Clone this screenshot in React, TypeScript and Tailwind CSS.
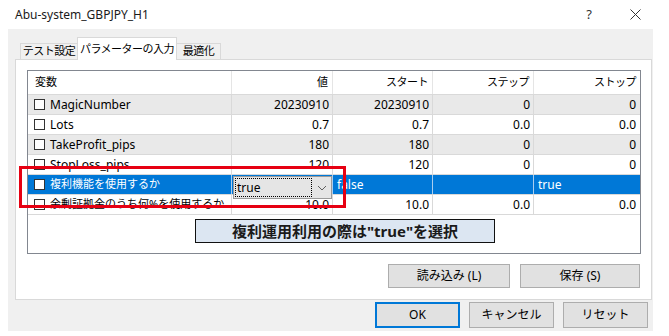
const rows = [
  { name: "MagicNumber", value: "20230910", start: "20230910", step: "0", stop: "0" },
  { name: "Lots", value: "0.7", start: "0.7", step: "0.0", stop: "0.0" },
  { name: "TakeProfit_pips", value: "180", start: "180", step: "0", stop: "0" },
  { name: "StopLoss_pips", value: "120", start: "120", step: "0", stop: "0" },
  { name: "複利機能を使用するか", selected: true },
  { name: "余剰証拠金のうち何%を使用するか", value: "10.0", start: "10.0", step: "0.0", stop: "0.0" },
];

function CheckBox() {
  return <span className="w-[11px] h-[11px] border border-[#333] bg-white shrink-0" />;
}

function Row({ row, index }: { row: (typeof rows)[number]; index: number }) {
  if (row.selected) {
    return (
      <div className="flex h-[20px] border-b border-[#d9d9d9] bg-[#0078d7] text-white">
        <div className="w-[204px] flex items-center gap-[5px] pl-[6px] border-r border-[#a9cdef] text-[11px]">
          <CheckBox />
          <span>{row.name}</span>
        </div>
        <div className="w-[101px] border-r border-[#a9cdef] pl-px">
          <div className="relative z-10 mt-px w-[99px] h-[23px] bg-[#e5e5e5] border border-[#9a9a9a] flex items-center pl-px text-black">
            <div className="w-[77px] h-[19px] border border-dotted border-black flex items-center pl-px">
              true
            </div>
            <svg className="ml-[5px]" width="10" height="6" viewBox="0 0 10 6">
              <path d="M1 1 L5 5 L9 1" fill="none" stroke="#606060" strokeWidth="1" />
            </svg>
          </div>
        </div>
        <div className="w-[100px] border-r border-[#a9cdef] flex items-center pl-[4px]">false</div>
        <div className="w-[101px] border-r border-[#a9cdef]" />
        <div className="w-[106px] flex items-center pl-[4px]">true</div>
      </div>
    );
  }
  const bg = index % 2 === 0 ? "bg-[#e9e9e9]" : "bg-white";
  return (
    <div className={`flex h-[20px] border-b border-[#d9d9d9] ${bg}`}>
      <div className="w-[204px] flex items-center gap-[5px] pl-[6px] border-r border-[#d9d9d9]">
        <CheckBox />
        <span className={/^[A-Za-z]/.test(row.name) ? "" : "text-[11px]"}>{row.name}</span>
      </div>
      <div className="w-[101px] border-r border-[#d9d9d9] flex items-center justify-end pr-[3px]">{row.value}</div>
      <div className="w-[100px] border-r border-[#d9d9d9] flex items-center justify-end pr-[3px]">{row.start}</div>
      <div className="w-[101px] border-r border-[#d9d9d9] flex items-center justify-end pr-[3px]">{row.step}</div>
      <div className="w-[106px] flex items-center justify-end pr-[4px]">{row.stop}</div>
    </div>
  );
}

export default function App() {
  return (
    <div className="relative w-[669px] h-[336px] bg-white text-[12px] text-black font-['Noto_Sans','Noto_Sans_CJK_JP',sans-serif] overflow-hidden">
      {/* Title bar */}
      <div className="h-[29px] flex items-center pl-[15px] pr-[11px]">
        <span className="text-[12px] text-[#1a1a1a]">Abu-system_GBPJPY_H1</span>
        <span className="ml-auto w-[46px] text-center text-[13px] text-[#333]">?</span>
        <span className="w-[46px] flex justify-center">
          <svg width="11" height="11" viewBox="0 0 11 11">
            <path d="M0.5 0.5 L10.5 10.5 M10.5 0.5 L0.5 10.5" stroke="#333" strokeWidth="1" />
          </svg>
        </span>
      </div>

      {/* Dialog body */}
      <div className="ml-[8px] w-[645px] h-[302px] bg-[#f0f0f0] flex flex-col">
        {/* Tabs */}
        <div className="relative z-10 flex items-end pt-[8px] pl-[12px] -mb-px text-[11px] tracking-[-0.5px]">
          <div className="w-[57px] h-[16px] mb-px border-t border-l border-[#d9d9d9] flex items-center justify-center">
            テスト設定
          </div>
          <div className="w-[100px] h-[23px] border-t border-x border-[#d9d9d9] bg-white flex items-center justify-center">
            パラメーターの入力
          </div>
          <div className="w-[44px] h-[16px] mb-px border-t border-r border-[#d9d9d9] flex items-center justify-center">
            最適化
          </div>
        </div>

        {/* Panel */}
        <div className="ml-[7px] w-[637px] h-[241px] bg-white border border-[#d9d9d9] pt-[10px] pl-[11px] pr-[10px]">
          <div className="w-[614px] h-[184px] border border-[#828790] flex flex-col">
            <div className="flex h-[24px] border-b border-[#d9d9d9] text-[11px]">
              <div className="w-[204px] border-r border-[#e5e5e5] flex items-center pl-[7px]">変数</div>
              <div className="w-[101px] border-r border-[#e5e5e5] flex items-center justify-end pr-[4px]">値</div>
              <div className="w-[100px] border-r border-[#e5e5e5] flex items-center justify-end pr-[4px] tracking-[-0.5px]">スタート</div>
              <div className="w-[101px] border-r border-[#e5e5e5] flex items-center justify-end pr-[4px] tracking-[-0.5px]">ステップ</div>
              <div className="w-[106px] flex items-center justify-end pr-[4px] tracking-[-0.5px]">ストップ</div>
            </div>
            {rows.map((r, i) => (
              <Row key={r.name} row={r} index={i} />
            ))}
            <div className="pt-[4px] pl-[167px]">
              <div className="w-[300px] h-[24px] bg-[#dce6f2] border border-[#111] flex items-center justify-center text-[15px] font-bold text-[#1a1a1a]">
                複利運用利用の際は"true"を選択
              </div>
            </div>
          </div>

          <div className="mt-[10px] flex justify-end gap-[10px] pr-px">
            <button className="w-[122px] h-[24px] bg-[#e1e1e1] border border-[#adadad] text-[12px]">読み込み (L)</button>
            <button className="w-[120px] h-[24px] bg-[#e1e1e1] border border-[#adadad] text-[12px]">保存 (S)</button>
          </div>
        </div>

        {/* Dialog buttons */}
        <div className="mt-[2px] flex justify-end gap-[9px] pr-[5px]">
          <button className="w-[85px] h-[26px] bg-[#e1e1e1] border-2 border-[#0078d7] text-[12px]">OK</button>
          <button className="w-[85px] h-[26px] bg-[#e1e1e1] border border-[#adadad] text-[12px]">キャンセル</button>
          <button className="w-[85px] h-[26px] bg-[#e1e1e1] border border-[#adadad] text-[12px]">リセット</button>
        </div>
      </div>

      {/* Annotation frame */}
      <div className="absolute left-[19px] top-[166px] w-[327px] h-[42px] border-[3px] border-[#e60012]" />
    </div>
  );
}
